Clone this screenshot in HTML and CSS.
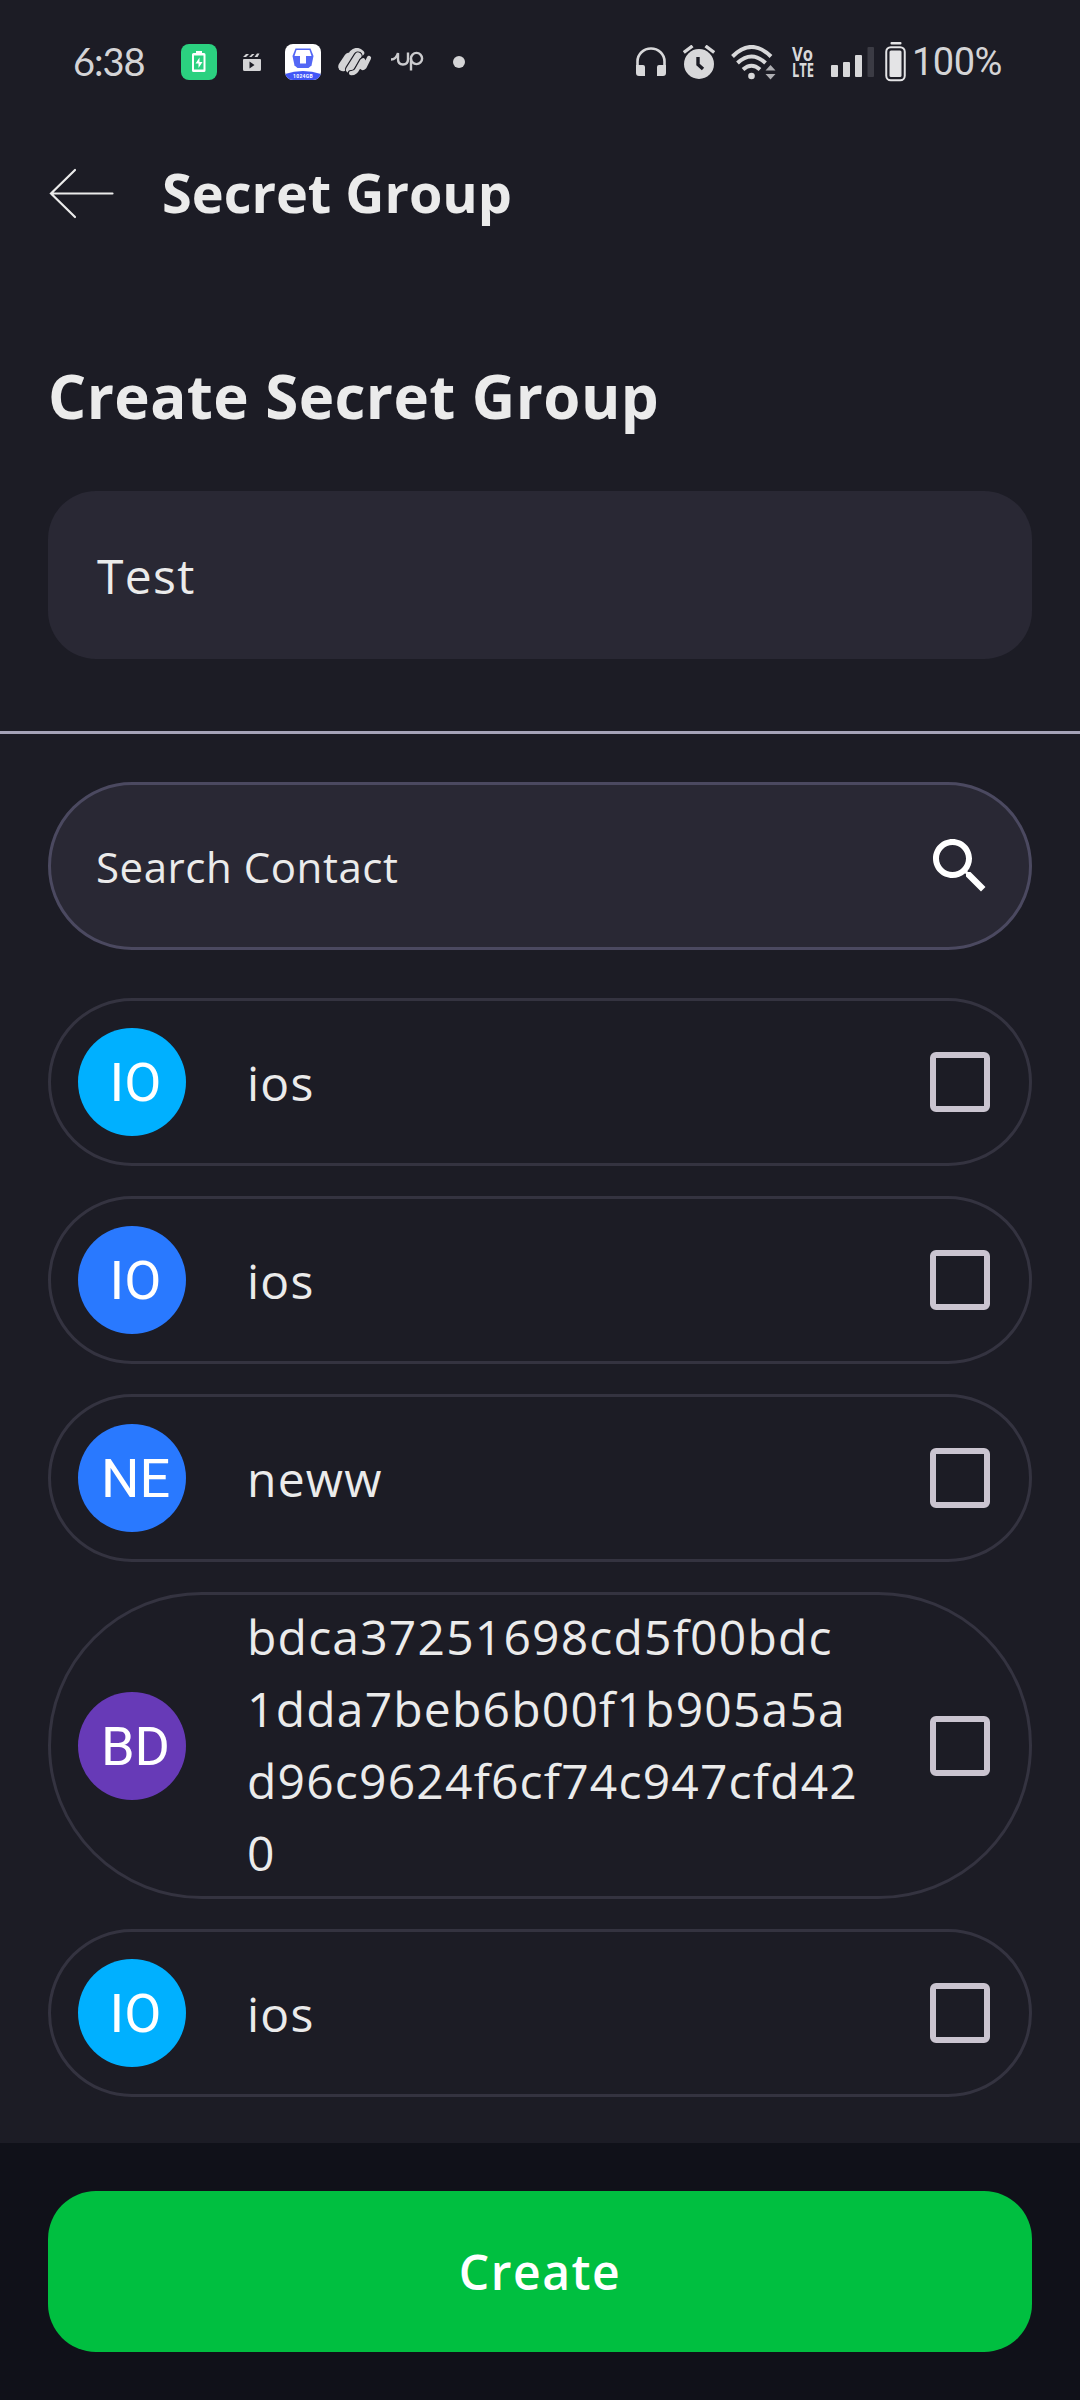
FILE: index.html
```html
<!DOCTYPE html>
<html lang="en">
<head>
<meta charset="utf-8">
<title>Secret Group</title>
<link rel="stylesheet" href="styles.css">
</head>
<body>
<div class="screen">
  <header class="status">
    <div class="status-left">
      <span class="clock">6:38</span>
      <svg class="ic-charge" width="36" height="36" viewBox="0 0 36 36"><rect width="36" height="36" rx="8" fill="#2bd180"/><path d="M15 7h6v2h2a1.500 1.500 0 0 1 1.500 1.500v16a1.500 1.500 0 0 1-1.500 1.500H12.500a1.500 1.500 0 0 1-1.500-1.500v-16A1.500 1.500 0 0 1 12.500 9H15z" fill="#fff"/><rect x="13" y="11.500" width="9.500" height="14" fill="#2bd180"/><path d="M18.500 13.500l-4 6h3v4.500l4-6h-3z" fill="#fff"/></svg>
      <svg class="ic-clip" width="18" height="18" viewBox="0 0 18 18" fill="#d4d4d6"><path d="M1 6h16a1 1 0 0 1 1 1v9.500a1.500 1.500 0 0 1-1.500 1.500h-15A1.500 1.500 0 0 1 0 16.500V7a1 1 0 0 1 1-1zM6.500 8.500v7l5-3.500z" fill-rule="evenodd"/><path d="M0 4L3 1h3L3 4zM6 4l3-3h2.500l-3 3zM11.500 4l2.500-3.500h2.500L14.500 4z"/></svg>
      <svg class="ic-tera" width="36" height="36" viewBox="0 0 36 36"><defs><clipPath id="tile"><rect width="36" height="36" rx="8"/></clipPath></defs><g clip-path="url(#tile)"><rect width="36" height="36" fill="#fff"/><path d="M0 30Q18 24 36 30v6H0z" fill="#4257f7"/></g><path d="M10.500 4.500h15L28.500 12l-2 9.500L23.500 24h-11l-3-2.500L7.500 12z" fill="#5367f5"/><path d="M11.500 6h13l2 6h-5.500v7.500h-6V12H9.500z" fill="#fff"/><text class="tera-label" x="18" y="33.500" text-anchor="middle">1024GB</text></svg>
      <svg class="ic-knot" width="34" height="28" viewBox="0 0 34 28" fill="none" stroke-linecap="round" stroke-linejoin="round">
        <path d="M5 18.500L11 9.500" stroke="#d4d4d6" stroke-width="9.500"/>
        <path d="M14 5Q19 .5 23.500 5" stroke="#d4d4d6" stroke-width="5.500"/>
        <path d="M11.500 21.500L20 8" stroke="#1c1c25" stroke-width="9.200"/>
        <path d="M11.500 21.500L20 8" stroke="#d4d4d6" stroke-width="7"/>
        <path d="M13 25.200Q17.500 25.500 19.500 21L24 13Q26 11 25 14.500L23.500 18Q24 21.500 26.500 19L31 10" stroke="#1c1c25" stroke-width="6.600"/>
        <path d="M13 25.200Q17.500 25.500 19.500 21L24 13Q26 11 25 14.500L23.500 18Q24 21.500 26.500 19L31 10" stroke="#d4d4d6" stroke-width="4.200"/>
      </svg>
      <svg class="ic-up" width="33" height="26" viewBox="0 0 33 26" fill="none" stroke="#cbcbce" stroke-width="2.400"><path d="M0 10.500Q5 10.500 7 4V10q0 5.500 5 5.500T17 10V3.500M20 21.500V9.500"/><circle cx="25.500" cy="9.500" r="5.600"/></svg>
      <span class="dot"></span>
    </div>
    <div class="status-right">
      <svg width="30" height="30" viewBox="0 0 30 30"><path d="M1.500 21V14.500a13.500 13 0 0 1 27 0V21" fill="none" stroke="#d8d8da" stroke-width="2.600"/><path d="M0 18h7q2 0 2 2v9H3q-3 0-3-3zM30 18h-7q-2 0-2 2v9h6q3 0 3-3z" fill="#d8d8da"/></svg>
      <svg class="ic-alarm" width="32" height="34" viewBox="0 0 32 34"><circle cx="16" cy="19" r="15" fill="#d8d8da"/><path d="M.8 7.500L9.500 1M31.200 7.500L22.500 1" stroke="#d8d8da" stroke-width="3.400"/><path d="M15 12v7.500l5 4.500" fill="none" stroke="#1c1c25" stroke-width="3.400"/></svg>
      <svg class="ic-wifi" width="45" height="35" viewBox="0 0 45 35"><g fill="none" stroke="#d8d8da" stroke-width="4"><path d="M1.500 11.500Q20.500-7.500 40 11.500"/><path d="M6.500 18Q20.500 5 34.500 18"/><path d="M12 24.500Q20.500 17 29 24.500"/></g><circle cx="20.500" cy="31" r="3.300" fill="#d8d8da"/><path d="M34.500 25.500l5-5.500 5 5.500zM34.500 29h10l-5 5.500z" fill="#aeaeb2"/></svg>
      <svg class="volte" width="22" height="31" viewBox="0 0 22 31"><text x="0" y="14.300" textLength="21" lengthAdjust="spacingAndGlyphs">Vo</text><text x="0" y="30" textLength="22" lengthAdjust="spacingAndGlyphs">LTE</text></svg>
      <svg class="ic-signal" width="44" height="31" viewBox="0 0 44 31" fill="#d8d8da"><rect y="18" width="7" height="12" rx="1"/><rect x="12" y="15" width="7" height="15" rx="1"/><rect x="24" y="8" width="7" height="22" rx="1"/><rect x="36.500" width="6.500" height="30" rx="1" fill="#3b3b44"/></svg>
      <svg class="ic-battery" width="22" height="40" viewBox="0 0 22 40"><rect x="5.500" width="11" height="2.500" rx="1" fill="#e4e4e6"/><rect x="1.250" y="5.250" width="18.500" height="33" rx="4.500" fill="none" stroke="#e4e4e6" stroke-width="2"/><rect x="4.500" y="8.500" width="12" height="26.500" rx="1.500" fill="#e4e4e6"/></svg>
      <span class="percent">100%</span>
    </div>
  </header>

  <nav class="appbar">
    <svg width="66" height="52" viewBox="0 0 66 52" fill="none" stroke="#ebebeb" stroke-width="2.200" stroke-linecap="round"><path d="M64.500 26.500H3M27 3L3 26.500 27 50"/></svg>
    <h1>Secret Group</h1>
  </nav>

  <main>
    <section class="group">
      <h2>Create Secret Group</h2>
      <div class="name-field">Test</div>
    </section>
    <section class="contacts">
      <div class="search">
        <span>Search Contact</span>
        <svg width="72" height="72" viewBox="0 0 24 24" fill="#fff"><path d="M15.500 14h-.79l-.28-.27C15.410 12.590 16 11.110 16 9.500 16 5.910 13.090 3 9.500 3S3 5.910 3 9.500 5.910 16 9.500 16c1.610 0 3.090-.59 4.230-1.570l.27.28v.79l5 4.990L20.490 19l-4.990-5zm-6 0C7.010 14 5 11.990 5 9.500S7.010 5 9.500 5 14 7.010 14 9.500 11.990 14 9.500 14z"/></svg>
      </div>
      <div class="contact"><span class="avatar cyan">IO</span><span class="name">ios</span><span class="check"></span></div>
      <div class="contact"><span class="avatar blue">IO</span><span class="name">ios</span><span class="check"></span></div>
      <div class="contact"><span class="avatar blue">NE</span><span class="name">neww</span><span class="check"></span></div>
      <div class="contact tall"><span class="avatar purple">BD</span><span class="name">bdca37251698cd5f00bdc<br>1dda7beb6b00f1b905a5a<br>d96c9624f6cf74c947cfd42<br>0</span><span class="check"></span></div>
      <div class="contact"><span class="avatar cyan">IO</span><span class="name">ios</span><span class="check"></span></div>
    </section>
  </main>

  <footer><button class="create">Create</button></footer>
</div>
</body>
</html>
```
FILE: styles.css
```css
* { box-sizing: border-box; }
body { margin: 0; background: #1c1c25; }
.screen {
  width: 1080px;
  height: 2400px;
  display: flex;
  flex-direction: column;
  overflow: hidden;
  background: #1c1c25;
  color: #ebebeb;
  font-family: "Open Sans", "Noto Sans", sans-serif;
}
svg { display: block; flex: none; }

.status {
  height: 124px;
  padding: 0 77px 0 73px;
  display: flex;
  justify-content: space-between;
  align-items: center;
  color: #d4d4d6;
}
.status-left, .status-right { display: flex; align-items: center; height: 124px; }
.clock {
  width: 108px;
  padding-bottom: 2px;
  font-family: Lato, sans-serif;
  font-size: 38px;
  line-height: 48px;
  letter-spacing: -1px;
}
.ic-clip { margin-left: 26px; }
.ic-tera { margin-left: 24px; }
.tera-label { font: bold 5px Roboto, sans-serif; fill: #fff; letter-spacing: .3px; }
.ic-knot { margin-left: 17px; }
.ic-up { margin-left: 19px; }
.dot { width: 12px; height: 12px; border-radius: 50%; background: #d4d4d6; margin-left: 29px; }
.ic-alarm { margin-left: 17px; }
.ic-wifi { margin-left: 16px; }
.volte { margin-left: 16px; overflow: visible; font: bold 20px "Open Sans", sans-serif; fill: #d8d8da; }
.ic-signal { margin-left: 17px; }
.ic-battery { margin-left: 10px; }
.percent { margin-left: 5px; width: 91px; font: 38px/48px Roboto, sans-serif; letter-spacing: -.5px; }

.appbar {
  height: 138px;
  padding-left: 48px;
  display: flex;
  align-items: center;
  gap: 48px;
}
h1, h2 { margin: 0; font-weight: 700; }
h1 { padding-bottom: 3px; font-size: 54px; line-height: 74px; }

.group { height: 472px; padding: 93px 48px 0; border-bottom: 3px solid #a5a3b8; }
h2 { font-size: 60px; line-height: 82px; letter-spacing: .42px; }
.name-field {
  margin-top: 54px;
  height: 168px;
  padding-left: 49px;
  display: flex;
  align-items: center;
  border-radius: 48px;
  background: #292834;
  font-size: 48px;
  letter-spacing: 1.3px;
}
.contacts { padding: 48px 48px 0; }
.search {
  height: 168px;
  margin-bottom: 48px;
  padding: 0 33px 0 45px;
  display: flex;
  align-items: center;
  justify-content: space-between;
  border: 3px solid #4b4960;
  border-radius: 84px;
  background: #292834;
  font-size: 42px;
  letter-spacing: .55px;
}
.contact {
  height: 168px;
  margin-bottom: 30px;
  padding: 0 39px 0 27px;
  display: flex;
  align-items: center;
  border: 3px solid #343340;
  border-radius: 154px;
}
.contact.tall { height: 307px; }
.avatar {
  width: 108px;
  height: 108px;
  padding: 1px 0 0 7px;
  flex: none;
  display: flex;
  align-items: center;
  justify-content: center;
  border-radius: 50%;
  color: #fff;
  font: 54px Roboto, sans-serif;
}
.cyan { background: #00b0ff; }
.blue { background: #2979ff; }
.purple { background: #673ab7; }
.name {
  margin-left: 61px;
  padding-top: 1px;
  flex: 1;
  font-size: 48px;
  line-height: 72px;
  letter-spacing: 1.2px;
  white-space: nowrap;
}
.tall .name { padding: 0 0 2px; }
.check { width: 60px; height: 60px; flex: none; border: 6px solid #cac4d0; border-radius: 6px; }

footer { margin-top: auto; height: 257px; padding: 48px 48px 0; background: #101119; }
.create {
  width: 100%;
  height: 161px;
  border: 0;
  border-radius: 48px;
  background: #00bf40;
  color: #fff;
  font: 600 48px "Open Sans", sans-serif;
  letter-spacing: 1.5px;
}
```
